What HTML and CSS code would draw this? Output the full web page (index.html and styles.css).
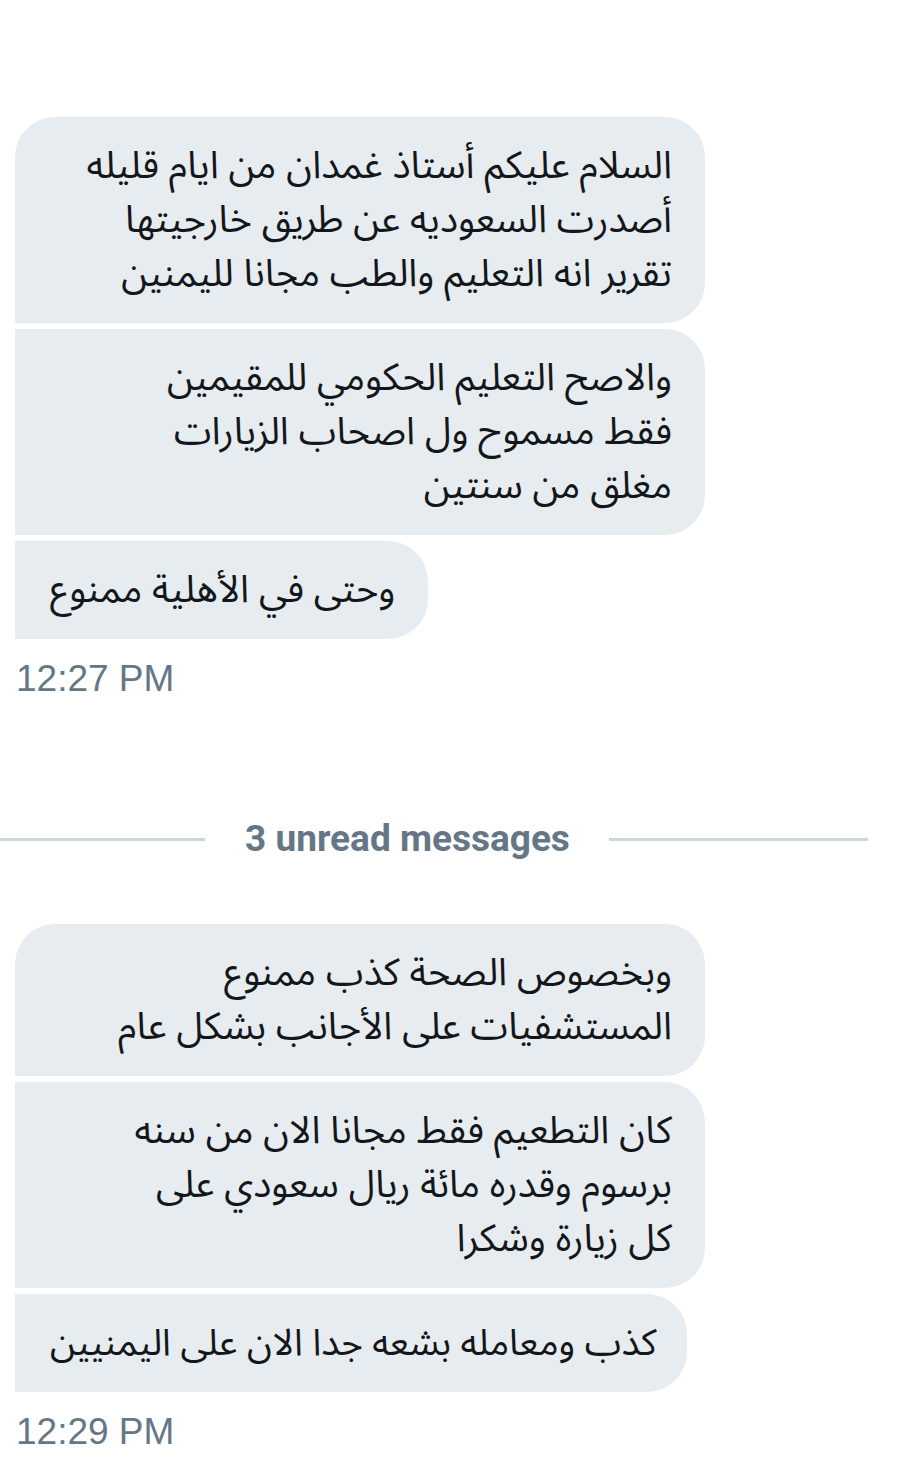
FILE: index.html
```html
<!DOCTYPE html>
<html lang="ar">
<head>
  <meta charset="UTF-8" />
  <meta name="viewport" content="width=device-width, initial-scale=1" />
  <title>Messages</title>
  <link rel="stylesheet" href="styles.css">
</head>
<body>
  <div class="group">
    <div class="bubble wide first" dir="rtl">السلام عليكم أستاذ غمدان من ايام قليله<br>أصدرت السعوديه عن طريق خارجيتها<br>تقرير انه التعليم والطب مجانا لليمنين</div>
    <div class="bubble wide" dir="rtl">والاصح التعليم الحكومي للمقيمين<br>فقط مسموح ول اصحاب الزيارات<br>مغلق من سنتين</div>
    <div class="bubble" dir="rtl">وحتى في الأهلية ممنوع</div>
    <div class="time">12:27 PM</div>
  </div>

  <div class="divider">
    <span class="line left"></span>
    <span class="label">3 unread messages</span>
    <span class="line right"></span>
  </div>

  <div class="group">
    <div class="bubble wide first" dir="rtl">وبخصوص الصحة كذب ممنوع<br>المستشفيات على الأجانب بشكل عام</div>
    <div class="bubble wide" dir="rtl">كان التطعيم فقط مجانا الان من سنه<br>برسوم وقدره مائة ريال سعودي على<br>كل زيارة وشكرا</div>
    <div class="bubble last" dir="rtl">كذب ومعامله بشعه جدا الان على اليمنيين</div>
    <div class="time">12:29 PM</div>
  </div>
</body>
</html>
```

FILE: styles.css
```css
body {
  margin: 0;
  padding: 117px 0 0 0;
  background: #ffffff;
  font-family: "Liberation Sans", Arial, sans-serif;
  width: 899px;
}
.group {
  display: flex;
  flex-direction: column;
  align-items: flex-start;
  gap: 6px;
  padding-left: 15px;
}
.bubble {
  background-color: #e6ecf0;
  color: #14171a;
  font-family: "Noto Sans Arabic", "DejaVu Sans", sans-serif;
  font-size: 38px;
  line-height: 54px;
  padding: 22px 33px 22px 35px;
  border-radius: 0 40px 40px 0;
  text-align: right;
  white-space: nowrap;
}
.bubble.wide {
  width: 622px;
}
.bubble.first {
  border-top-left-radius: 40px;
}
.bubble.last {
  font-size: 37px;
  padding-right: 31px;
}
.time {
  margin-top: 13px;
  margin-left: 1px;
  font-size: 37px;
  line-height: 42px;
  color: #657786;
}
.divider {
  display: flex;
  align-items: center;
  width: 868px;
  margin-top: 118px;
  margin-bottom: 64px;
}
.line {
  height: 3px;
  background-color: #ccd6dd;
}
.line.left {
  width: 205px;
}
.line.right {
  flex: 1;
}
.label {
  margin: 0 39px 0 40px;
  font-family: Roboto, "Liberation Sans", sans-serif;
  font-weight: bold;
  font-size: 37px;
  line-height: 42px;
  color: #657786;
}
```
